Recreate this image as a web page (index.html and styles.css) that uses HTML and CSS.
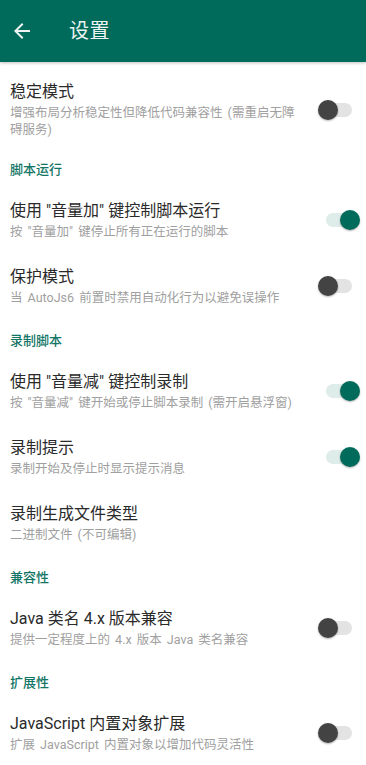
FILE: index.html
```html
<!DOCTYPE html>
<html lang="zh-CN">
<head>
<meta charset="utf-8">
<title>设置</title>
<link rel="stylesheet" href="styles.css">
</head>
<body>
<header class="appbar">
  <svg class="back" width="24" height="24" viewBox="0 0 24 24"><path d="M20 11H7.83l5.59-5.59L12 4l-8 8 8 8 1.41-1.41L7.83 13H20v-2z" fill="currentColor"/></svg>
  <h1 class="title">设置</h1>
</header>
<main class="list">
  <div class="row first">
    <div class="text">
      <div class="label">稳定模式</div>
      <div class="sub">增强布局分析稳定性但降低代码兼容性 (需重启无障碍服务)</div>
    </div>
    <span class="switch"><span class="thumb"></span></span>
  </div>
  <div class="section">脚本运行</div>
  <div class="row">
    <div class="text">
      <div class="label">使用 "音量加" 键控制脚本运行</div>
      <div class="sub">按 "音量加" 键停止所有正在运行的脚本</div>
    </div>
    <span class="switch on"><span class="thumb"></span></span>
  </div>
  <div class="row">
    <div class="text">
      <div class="label">保护模式</div>
      <div class="sub">当 AutoJs6 前置时禁用自动化行为以避免误操作</div>
    </div>
    <span class="switch"><span class="thumb"></span></span>
  </div>
  <div class="section">录制脚本</div>
  <div class="row">
    <div class="text">
      <div class="label">使用 "音量减" 键控制录制</div>
      <div class="sub">按 "音量减" 键开始或停止脚本录制 (需开启悬浮窗)</div>
    </div>
    <span class="switch on"><span class="thumb"></span></span>
  </div>
  <div class="row">
    <div class="text">
      <div class="label">录制提示</div>
      <div class="sub">录制开始及停止时显示提示消息</div>
    </div>
    <span class="switch on"><span class="thumb"></span></span>
  </div>
  <div class="row">
    <div class="text">
      <div class="label">录制生成文件类型</div>
      <div class="sub">二进制文件 (不可编辑)</div>
    </div>
  </div>
  <div class="section">兼容性</div>
  <div class="row">
    <div class="text">
      <div class="label">Java 类名 4.x 版本兼容</div>
      <div class="sub">提供一定程度上的 4.x 版本 Java 类名兼容</div>
    </div>
    <span class="switch"><span class="thumb"></span></span>
  </div>
  <div class="section">扩展性</div>
  <div class="row">
    <div class="text">
      <div class="label">JavaScript 内置对象扩展</div>
      <div class="sub">扩展 JavaScript 内置对象以增加代码灵活性</div>
    </div>
    <span class="switch"><span class="thumb"></span></span>
  </div>
</main>
</body>
</html>
```
FILE: styles.css
```css
* { box-sizing: border-box; }
html, body { margin: 0; padding: 0; }
body {
  width: 366px;
  height: 765px;
  overflow: hidden;
  background: #ffffff;
  font-family: Roboto, "Noto Sans CJK SC", sans-serif;
}
.appbar {
  height: 62px;
  background: #006b5b;
  color: #eef4f2;
  display: flex;
  align-items: center;
  padding-left: 10px;
  box-shadow: 0 1px 3px rgba(0,0,0,0.25);
  position: relative;
  z-index: 1;
}
.back { display: block; }
.title {
  margin: 0 0 0 35px;
  font-size: 20px;
  font-weight: 400;
  line-height: 24px;
  letter-spacing: 0.5px;
}
.list { padding-top: 6px; }
.row {
  display: flex;
  align-items: center;
  padding: 13.5px 14px 13.5px 10px;
  min-height: 66px;
}
.row.first { padding-bottom: 10.5px; }
.text { flex: 1; min-width: 0; padding-right: 16px; }
.label {
  font-size: 16px;
  line-height: 20px;
  color: #2a2a2a;
}
.sub {
  margin-top: 2px;
  font-size: 12.5px;
  line-height: 17px;
  word-spacing: 2px;
  color: #a0a0a0;
}
.section {
  padding: 13.5px 10px 0;
  height: 39px;
  font-size: 13px;
  line-height: 16px;
  color: #137565;
  font-weight: 500;
}
.switch {
  flex: none;
  position: relative;
  width: 26px;
  height: 14px;
  border-radius: 7px;
  background: #e3e3e3;
  margin-left: 8px;
}
.thumb {
  position: absolute;
  top: -3px;
  left: -8px;
  width: 20px;
  height: 20px;
  border-radius: 50%;
  background: #434343;
  box-shadow: 0 1px 2px rgba(0,0,0,0.3);
}
.switch.on { background: #deecea; }
.switch.on .thumb { left: 14px; background: #006b5b; }
```
